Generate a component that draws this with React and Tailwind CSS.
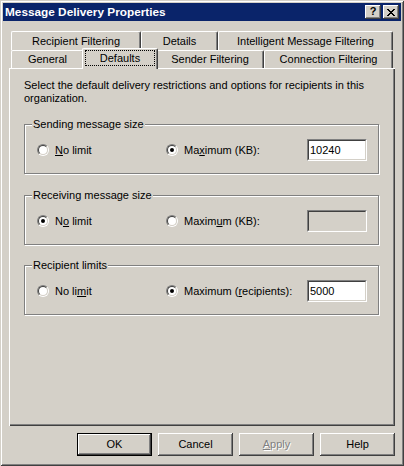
import React from "react";

const raised =
  "shadow-[inset_-1px_-1px_#404040,inset_1px_1px_#ffffff,inset_-2px_-2px_#808080]";

function Radio({ checked }) {
  return (
    <span className="w-[12px] h-[12px] shrink-0 rounded-full border border-t-[#808080] border-l-[#808080] border-r-white border-b-white flex">
      <span className="flex-1 rounded-full border border-t-[#404040] border-l-[#404040] border-r-[#d4d0c8] border-b-[#d4d0c8] bg-white flex items-center justify-center">
        {checked && <span className="w-[4px] h-[4px] rounded-full bg-black" />}
      </span>
    </span>
  );
}

function RadioLabel({ checked, children }) {
  return (
    <div className="flex items-center gap-[6px] whitespace-nowrap">
      <Radio checked={checked} />
      <span>{children}</span>
    </div>
  );
}

function Input({ value, disabled }) {
  return (
    <div
      className={
        "w-[60px] h-[22px] border border-t-[#808080] border-l-[#808080] border-r-white border-b-white " +
        "flex"
      }
    >
      <div
        className={
          "flex-1 border border-t-[#404040] border-l-[#404040] border-r-[#d4d0c8] border-b-[#d4d0c8] pl-[1px] leading-[18px] " +
          (disabled ? "bg-[#d4d0c8]" : "bg-white")
        }
      >
        {value}
      </div>
    </div>
  );
}

function GroupBox({ label, left, right, value, disabled, className }) {
  return (
    <div
      className={
        "relative w-[355px] h-[50px] border border-[#808080] shadow-[inset_1px_1px_#ffffff,1px_1px_#ffffff] pt-[14px] pl-[12px] " +
        (className || "")
      }
    >
      <div className="absolute left-[7px] top-[-7px] bg-[#d4d0c8] px-[1px] leading-[13px] whitespace-nowrap">
        {label}
      </div>
      <div className="flex items-center h-[22px]">
        <div className="w-[129px]">{left}</div>
        <div className="w-[141px]">{right}</div>
        <Input value={value} disabled={disabled} />
      </div>
    </div>
  );
}

function Tab({ w, children, h = "h-[18px]" }) {
  return (
    <div
      className={
        "relative flex items-center justify-center border-t border-l border-white border-r border-r-[#404040] rounded-tl-[2px] rounded-tr-[2px] shadow-[inset_-1px_0_#808080] whitespace-nowrap " +
        h +
        " " +
        w
      }
    >
      {children}
    </div>
  );
}

function Button({ children, isDefault, disabled }) {
  if (isDefault) {
    return (
      <div className="w-[75px] h-[23px] border border-black flex">
        <div
          className={
            "flex-1 flex items-center justify-center bg-[#d4d0c8] " + raised
          }
        >
          {children}
        </div>
      </div>
    );
  }
  return (
    <div
      className={
        "w-[75px] h-[23px] flex items-center justify-center bg-[#d4d0c8] " +
        raised +
        (disabled ? " text-[#808080] [text-shadow:1px_1px_0_#ffffff]" : "")
      }
    >
      {children}
    </div>
  );
}

export default function App() {
  return (
    <div
      className="w-[404px] h-[466px] bg-[#d4d0c8] p-[3px] text-[11px] leading-[13px] text-black shadow-[inset_1px_1px_#d4d0c8,inset_-1px_-1px_#404040,inset_2px_2px_#ffffff,inset_-2px_-2px_#808080] flex flex-col"
      style={{ fontFamily: '"Liberation Sans", Arial, sans-serif' }}
    >
      {/* Title bar */}
      <div className="h-[18px] bg-[#0a246a] flex items-center pl-[2px] pr-[2px]">
        <div className="flex-1 text-white font-bold text-[11.8px] leading-[13px] whitespace-nowrap">
          Message Delivery Properties
        </div>
        <div className="flex gap-[2px]">
          <div
            className={
              "w-[16px] h-[14px] bg-[#d4d0c8] flex items-center justify-center font-bold text-[11px] leading-[11px] " +
              raised
            }
          >
            <span className="mt-[-1px]">?</span>
          </div>
          <div
            className={
              "w-[16px] h-[14px] bg-[#d4d0c8] flex items-center justify-center " +
              raised
            }
          >
            <svg width="8" height="7" viewBox="0 0 8 7" shapeRendering="crispEdges">
              <path
                d="M0 0h2v1H0zM6 0h2v1H6zM1 1h2v1H1zM5 1h2v1H5zM2 2h4v1H2zM3 3h2v1H3zM2 4h4v1H2zM1 5h2v1H1zM5 5h2v1H5zM0 6h2v1H0zM6 6h2v1H6z"
                fill="#000"
              />
            </svg>
          </div>
        </div>
      </div>

      {/* Tabs + panel */}
      <div className="px-[6px] pt-[10px] flex flex-col">
        <div className="pl-[2px] flex">
          <Tab w="w-[130px]" h="h-[19px]">Recipient Filtering</Tab>
          <Tab w="w-[77px]" h="h-[19px]">Details</Tab>
          <Tab w="w-[175px]" h="h-[19px]">Intelligent Message Filtering</Tab>
        </div>
        <div className="pl-[2px] flex relative z-10">
          <Tab w="w-[73px]">General</Tab>
          <div className="relative w-[76px] h-[21px] -mt-[2px] -mx-[2px] -mb-[1px] bg-[#d4d0c8] border-t border-l border-white border-r border-r-[#404040] rounded-tl-[2px] rounded-tr-[2px] shadow-[inset_-1px_0_#808080] pl-[2px] pr-[2px] pt-[1px] z-10">
            <div className="h-[16px] border border-dotted border-black flex items-center justify-center">
              Defaults
            </div>
          </div>
          <Tab w="w-[108px]">Sender Filtering</Tab>
          <Tab w="w-[129px]">Connection Filtering</Tab>
        </div>

        <div className="h-[358px] shadow-[inset_1px_1px_#ffffff,inset_-1px_-1px_#404040,inset_-2px_-2px_#808080] pt-[11px] px-[15px]">
          <div className="whitespace-nowrap">
            Select the default delivery restrictions and options for recipients in this
            <br />
            organization.
          </div>

          <GroupBox
            className="mt-[19px]"
            label="Sending message size"
            left={
              <RadioLabel>
                <u>N</u>o limit
              </RadioLabel>
            }
            right={
              <RadioLabel checked>
                Ma<u>x</u>imum (KB):
              </RadioLabel>
            }
            value="10240"
          />
          <GroupBox
            className="mt-[21px]"
            label="Receiving message size"
            left={
              <RadioLabel checked>
                N<u>o</u> limit
              </RadioLabel>
            }
            right={
              <RadioLabel>
                Maxim<u>u</u>m (KB):
              </RadioLabel>
            }
            value=""
            disabled
          />
          <GroupBox
            className="mt-[20px]"
            label="Recipient limits"
            left={
              <RadioLabel>
                No li<u>m</u>it
              </RadioLabel>
            }
            right={
              <RadioLabel checked>
                Maximum (<u>r</u>ecipients):
              </RadioLabel>
            }
            value="5000"
          />
        </div>

        <div className="flex justify-end gap-[6px] mt-[7px]">
          <Button isDefault>OK</Button>
          <Button>Cancel</Button>
          <Button disabled>
            <u>A</u>pply
          </Button>
          <Button>Help</Button>
        </div>
      </div>
    </div>
  );
}
